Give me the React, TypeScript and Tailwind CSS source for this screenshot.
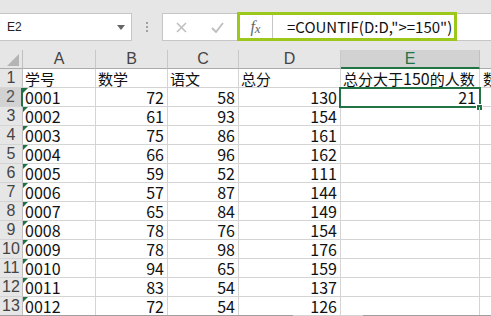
import React from "react";

const CELLFONT = { fontFamily: '"Noto Sans CJK SC","Liberation Sans",sans-serif' };

const data: [string, number, number, number][] = [
  ["0001", 72, 58, 130],
  ["0002", 61, 93, 154],
  ["0003", 75, 86, 161],
  ["0004", 66, 96, 162],
  ["0005", 59, 52, 111],
  ["0006", 57, 87, 144],
  ["0007", 65, 84, 149],
  ["0008", 78, 76, 154],
  ["0009", 78, 98, 176],
  ["0010", 94, 65, 159],
  ["0011", 83, 54, 137],
  ["0012", 72, 54, 126],
];

function Cjk({ children }: { children: React.ReactNode }) {
  return <span className="text-[15px]">{children}</span>;
}

function ColHeader({ label, w, selected }: { label: string; w: string; selected?: boolean }) {
  return (
    <div
      className={`${w} shrink-0 h-full flex items-center justify-center border-r text-[16px] ${
        selected
          ? "bg-[#d2d2d2] text-[#217346] border-r-[#c0c0c0] border-b-2 border-b-[#217346]"
          : "text-[#444] border-r-[#c8c8c8] border-b border-b-[#ababab]"
      }`}
    >
      {label}
    </div>
  );
}

const cell = "shrink-0 h-full border-r border-b border-[#d4d4d4] whitespace-nowrap overflow-visible";

export default function App() {
  return (
    <div className="relative w-[491px] h-[316px] overflow-hidden bg-white [font-family:'Liberation_Sans',sans-serif]">
      {/* toolbar */}
      <div className="h-[50px] bg-[#e6e6e6] pt-[13px] flex items-start">
        <div className="w-[132px] shrink-0 h-[28px] bg-white border border-[#c6c6c6] border-l-0 flex items-center justify-between pl-[7px] pr-[6px]">
          <span className="text-[12px] text-[#222]">E2</span>
          <svg width="8" height="5" viewBox="0 0 8 5"><path d="M0 0 L8 0 L4 5 Z" fill="#666" /></svg>
        </div>
        <div className="w-[30px] shrink-0 h-[28px] flex flex-col items-center justify-center gap-[2px]">
          <span className="w-[2px] h-[2px] bg-[#a0a0a0]" />
          <span className="w-[2px] h-[2px] bg-[#a0a0a0]" />
          <span className="w-[2px] h-[2px] bg-[#a0a0a0]" />
        </div>
        <div className="w-[76px] shrink-0 h-[28px] bg-white border border-[#c6c6c6] border-r-0 flex items-center">
          <div className="w-[36px] flex justify-center">
            <svg width="11" height="11" viewBox="0 0 11 11"><path d="M1 1 L10 10 M10 1 L1 10" stroke="#bdbdbd" strokeWidth="1.5" /></svg>
          </div>
          <div className="w-[36px] flex justify-center">
            <svg width="13" height="11" viewBox="0 0 13 11"><path d="M1 6 L5 10 L12 1" stroke="#bdbdbd" strokeWidth="1.8" fill="none" /></svg>
          </div>
        </div>
        <div className="flex-1 min-w-0 h-[28px] bg-white border border-[#c6c6c6] border-r-0 flex items-center">
          <div className="w-[34px] shrink-0 h-full flex items-center justify-center border-r border-[#c6c6c6] text-[#666] italic [font-family:'Liberation_Serif',serif]">
            <span className="text-[16px]">f</span><span className="text-[13px] mt-[3px]">x</span>
          </div>
          <div className="pl-[14px] text-[15px] text-[#111] whitespace-nowrap" style={CELLFONT}>=COUNTIF(D:D,"&gt;=150")</div>
        </div>
      </div>

      {/* lime highlight */}
      <div className="absolute left-[237px] top-[12px] w-[220px] h-[29px] border-[3px] border-[#9bc81a]" />

      {/* column headers */}
      <div className="flex h-[19px] bg-[#e6e6e6]">
        <div className="w-[23px] shrink-0 h-full border-r border-r-[#c0c0c0] border-b border-b-[#ababab] flex items-end justify-end pr-[3px] pb-[2px]">
          <svg width="12" height="12" viewBox="0 0 12 12"><path d="M12 0 L12 12 L0 12 Z" fill="#b4b4b4" /></svg>
        </div>
        <ColHeader label="A" w="w-[73px]" />
        <ColHeader label="B" w="w-[72px]" />
        <ColHeader label="C" w="w-[71px]" />
        <ColHeader label="D" w="w-[102px]" />
        <ColHeader label="E" w="w-[139px]" selected />
        <div className="flex-1 h-full border-b border-b-[#ababab]" />
      </div>

      {/* row 1 */}
      <div className="flex h-[19px] text-[16px] text-[#111]" style={CELLFONT}>
        <div className="w-[23px] shrink-0 h-full bg-[#e6e6e6] border-r border-r-[#c0c0c0] border-b border-b-[#d4d4d4] flex items-center justify-center text-[16px] text-[#444] [font-family:'Liberation_Sans',sans-serif]">1</div>
        <div className={`${cell} w-[73px] pl-[2px] leading-[18px]`}><Cjk>学号</Cjk></div>
        <div className={`${cell} w-[72px] pl-[2px] leading-[18px]`}><Cjk>数学</Cjk></div>
        <div className={`${cell} w-[71px] pl-[2px] leading-[18px]`}><Cjk>语文</Cjk></div>
        <div className={`${cell} w-[102px] pl-[2px] leading-[18px]`}><Cjk>总分</Cjk></div>
        <div className={`${cell} w-[139px] pl-[2px] leading-[18px]`}>
          <Cjk>总分大于</Cjk>150<Cjk>的人数</Cjk>
        </div>
        <div className="flex-1 min-w-0 h-full border-b border-[#d4d4d4] pl-[3px] leading-[18px] whitespace-nowrap"><Cjk>数学成绩</Cjk></div>
      </div>

      {data.map(([id, m, c, t], i) => {
        const sel = i === 0;
        return (
          <div key={id} className="flex h-[19px] text-[16px] text-[#111]" style={CELLFONT}>
            <div
              className={`w-[23px] shrink-0 h-full border-b border-b-[#d4d4d4] flex items-center justify-center text-[16px] [font-family:'Liberation_Sans',sans-serif] ${
                sel ? "bg-[#d2d2d2] text-[#555] border-r-2 border-r-[#217346]" : "bg-[#e6e6e6] text-[#444] border-r border-r-[#c0c0c0]"
              }`}
            >
              {i + 2}
            </div>
            <div className={`${cell} relative w-[73px] pl-[2px] leading-[18px]`}>
              <span className="absolute left-0 top-0 w-0 h-0 border-t-[5px] border-t-[#1e7145] border-r-[5px] border-r-transparent" />
              {id}
            </div>
            <div className={`${cell} w-[72px] pr-[3px] text-right leading-[18px]`}>{m}</div>
            <div className={`${cell} w-[71px] pr-[3px] text-right leading-[18px]`}>{c}</div>
            <div className={`${cell} w-[102px] pr-[3px] text-right leading-[18px]`}>{t}</div>
            <div className={`${cell} relative w-[139px] pr-[3px] text-right leading-[18px]`}>
              {sel && (
                <>
                  <span className="absolute -left-[2px] -top-[1px] w-[142px] h-[21px] border-2 border-[#217346]" />
                  <span className="absolute left-[135px] top-[16px] w-[7px] h-[7px] bg-[#217346] border border-white" />
                  21
                </>
              )}
            </div>
            <div className="flex-1 min-w-0 h-full border-b border-[#d4d4d4]" />
          </div>
        );
      })}

      {/* bottom edge */}
      <div className="absolute left-0 bottom-0 w-[293px] h-[1px] bg-[#a0a0a0]" />
      <div className="absolute left-[363px] bottom-0 right-0 h-[1px] bg-[#a0a0a0]" />
    </div>
  );
}
